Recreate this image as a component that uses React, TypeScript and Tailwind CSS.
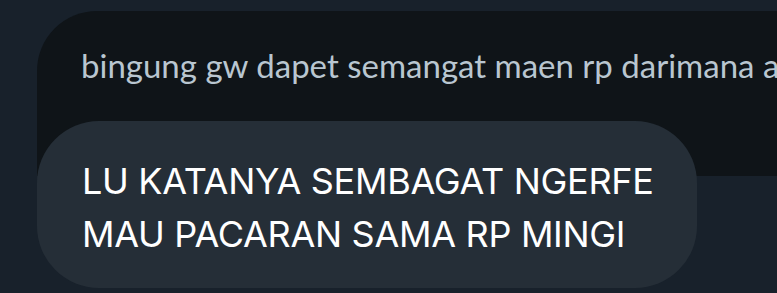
export default function App() {
  return (
    <div className="w-full h-[293px] overflow-hidden bg-[#18212b] pl-[37px] pt-[11px]">
      <div className="h-[165px] rounded-tl-[60px] bg-[#0f1418] pl-[44px] pt-[34px] overflow-hidden">
        <p className="whitespace-nowrap text-[33px] leading-[40px] text-[#b9c6d0] font-['Lato',sans-serif]">
          bingung gw dapet semangat maen rp darimana anjir
        </p>
      </div>
      <div className="relative -mt-[55px] w-[660px] h-[167px] rounded-[62px] bg-[#252e37] pl-[45px] pt-[34px]">
        <p className="text-[36px] leading-[52.5px] tracking-[-0.3px] text-white font-['Inter',sans-serif]">
          LU KATANYA SEMBAGAT NGERFE
          <br />
          MAU PACARAN SAMA RP MINGI
        </p>
      </div>
    </div>
  );
}
